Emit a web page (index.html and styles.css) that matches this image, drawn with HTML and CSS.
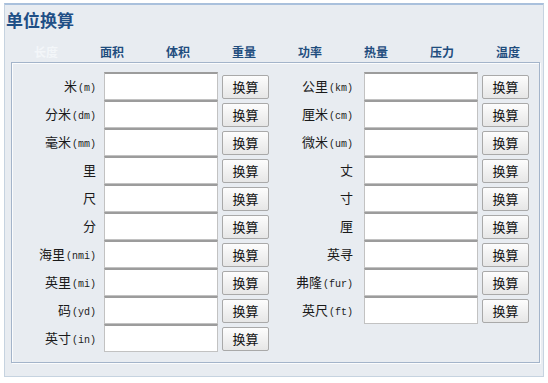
FILE: index.html
```html
<!DOCTYPE html>
<html lang="zh-CN">
<head>
  <meta charset="UTF-8" />
  <title>单位换算</title>
  <link rel="stylesheet" href="styles.css">
</head>
<body>
  <div class="panel">
    <h2 class="title">单位换算</h2>
    <div class="tabs">
      <span class="tab active">长度</span>
      <span class="tab">面积</span>
      <span class="tab">体积</span>
      <span class="tab">重量</span>
      <span class="tab">功率</span>
      <span class="tab">热量</span>
      <span class="tab">压力</span>
      <span class="tab">温度</span>
    </div>
    <div class="box">
      <div class="grid">
        <label class="lbl">米<small>(m)</small></label>
        <input type="text" class="val" />
        <div class="cell"><button>换算</button></div>
        <label class="lbl right">公里<small>(km)</small></label>
        <input type="text" class="val" />
        <div class="cell"><button>换算</button></div>

        <label class="lbl">分米<small>(dm)</small></label>
        <input type="text" class="val" />
        <div class="cell"><button>换算</button></div>
        <label class="lbl right">厘米<small>(cm)</small></label>
        <input type="text" class="val" />
        <div class="cell"><button>换算</button></div>

        <label class="lbl">毫米<small>(mm)</small></label>
        <input type="text" class="val" />
        <div class="cell"><button>换算</button></div>
        <label class="lbl right">微米<small>(um)</small></label>
        <input type="text" class="val" />
        <div class="cell"><button>换算</button></div>

        <label class="lbl">里</label>
        <input type="text" class="val" />
        <div class="cell"><button>换算</button></div>
        <label class="lbl right">丈</label>
        <input type="text" class="val" />
        <div class="cell"><button>换算</button></div>

        <label class="lbl">尺</label>
        <input type="text" class="val" />
        <div class="cell"><button>换算</button></div>
        <label class="lbl right">寸</label>
        <input type="text" class="val" />
        <div class="cell"><button>换算</button></div>

        <label class="lbl">分</label>
        <input type="text" class="val" />
        <div class="cell"><button>换算</button></div>
        <label class="lbl right">厘</label>
        <input type="text" class="val" />
        <div class="cell"><button>换算</button></div>

        <label class="lbl">海里<small>(nmi)</small></label>
        <input type="text" class="val" />
        <div class="cell"><button>换算</button></div>
        <label class="lbl right">英寻</label>
        <input type="text" class="val" />
        <div class="cell"><button>换算</button></div>

        <label class="lbl">英里<small>(mi)</small></label>
        <input type="text" class="val" />
        <div class="cell"><button>换算</button></div>
        <label class="lbl right">弗隆<small>(fur)</small></label>
        <input type="text" class="val" />
        <div class="cell"><button>换算</button></div>

        <label class="lbl">码<small>(yd)</small></label>
        <input type="text" class="val" />
        <div class="cell"><button>换算</button></div>
        <label class="lbl right">英尺<small>(ft)</small></label>
        <input type="text" class="val" />
        <div class="cell"><button>换算</button></div>

        <label class="lbl">英寸<small>(in)</small></label>
        <input type="text" class="val" />
        <div class="cell"><button>换算</button></div>
      </div>
    </div>
  </div>
</body>
</html>
```

FILE: styles.css
```css
body {
  margin: 0;
  padding: 0;
  background-color: #fff;
  font-family: "Noto Sans CJK SC", "DejaVu Sans", sans-serif;
  color: #222;
}

.panel {
  width: 538px;
  margin: 3px 0 0 4px;
  background-color: #e8ecf1;
  border: 1px solid #c6d3e0;
  border-top: 2px solid #a9c0dc;
  padding: 0 0 13px 0;
}

.title {
  margin: 0;
  padding: 3px 0 0 1px;
  font-size: 17px;
  line-height: 24px;
  font-weight: bold;
  color: #1f4f86;
}

.tabs {
  display: flex;
  padding: 10px 0 0 8px;
}

.tab {
  width: 66px;
  text-align: center;
  font-size: 12px;
  line-height: 20px;
  font-weight: bold;
  color: #1f4d7e;
}

.tab.active {
  color: #f3f6f9;
}

.box {
  margin: 0 3px 0 6px;
  border: 1px solid #a3b4ca;
  box-shadow: inset 1px 1px 0 #fbfcfd, 1px 1px 0 #fbfcfd;
  padding: 9px 0 10px 0;
}

.grid {
  display: grid;
  grid-template-columns: 92px 114px 51px 95px 114px 51px;
  grid-auto-rows: 28px;
}

.lbl {
  text-align: right;
  padding-right: 8px;
  font-size: 13px;
  line-height: 28px;
  color: #1a1a1a;
}

.lbl.right {
  padding-right: 11px;
}

.lbl small {
  font-family: "Liberation Mono", monospace;
  font-size: 10px;
  margin-left: 1px;
}

.val {
  box-sizing: border-box;
  width: 114px;
  height: 28px;
  margin: 0;
  border: 1px solid #c2c2c2;
  border-top: 2px solid #9c9c9c;
  background-color: #fff;
}

.cell {
  padding: 1px 0 0 4px;
}

.cell button {
  box-sizing: border-box;
  width: 47px;
  height: 24px;
  padding: 0;
  border: 1px solid #a9a9a9;
  border-radius: 2px;
  background: linear-gradient(#fdfdfd, #e6e6e6);
  font-family: "Noto Sans CJK SC", sans-serif;
  font-size: 13px;
  color: #111;
}
```
